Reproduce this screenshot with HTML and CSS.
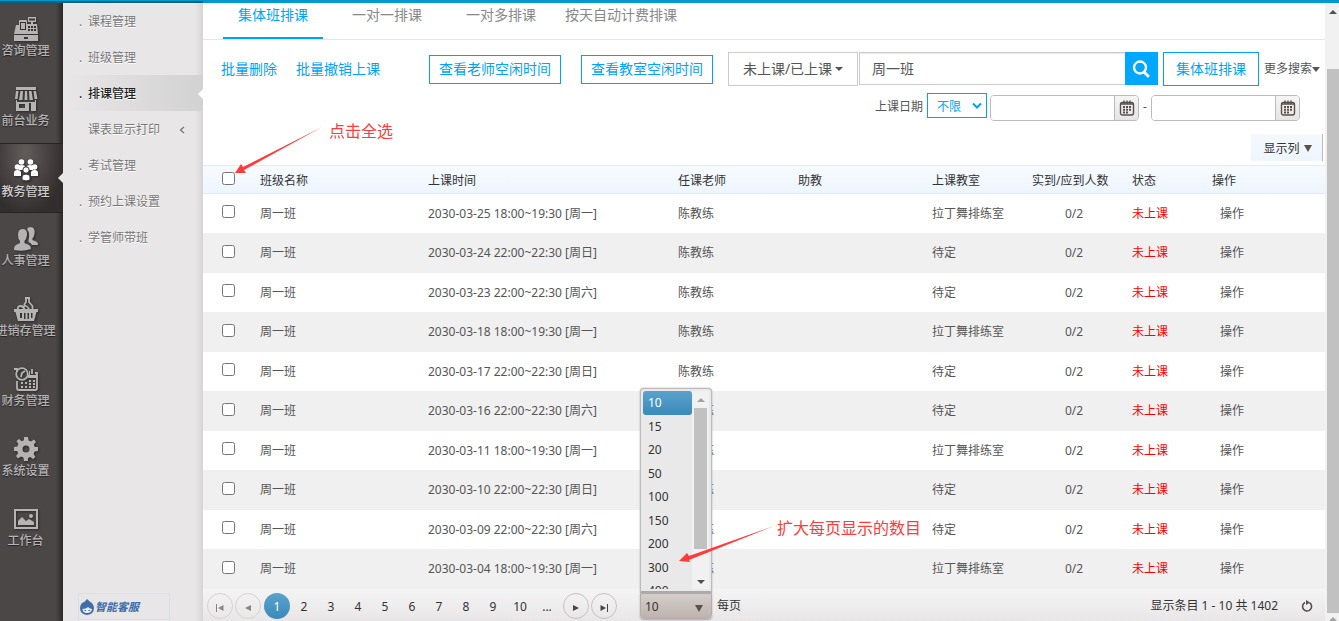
FILE: index.html
```html
<!DOCTYPE html>
<html lang="zh-CN">
<head>
<meta charset="utf-8">
<title>排课管理</title>
<link rel="stylesheet" href="styles.css">
</head>
<body>
<div class="topbar"><div class="topbar-shade"></div></div>
<div class="app">
  <nav class="rail">
    <a class="rail-item" href="#"><svg class="rail-icon" viewBox="0 0 24 24"><path fill-rule="evenodd" d="M14 0h8v5h-3v2h4l1 10H0l2-9h3V4q0-1 1-1h6q1 0 1 1v3h4V5h-3zM15 1.500h6v2h-6zM6 5v8h6V5zM7 6h4v6H7zM14 9v2h2V9zm3 0v2h2V9zm3 0v2h2V9zm-6 3v2h2v-2zm3 0v2h2v-2zm3 0v2h2v-2z"/><path fill-rule="evenodd" d="M0 18h24v6H0zm10 2v2h4v-2z"/></svg><span>咨询管理</span></a>
    <a class="rail-item" href="#"><svg class="rail-icon" viewBox="0 0 24 24"><path d="M2 0h20v3H2zM2 4h2.500L3.500 12H1zM6.500 4H9l-.5 9H5zM11 4h2l.5 9h-3zM15 4h2.500l1.500 9h-3.500zM19.500 4H22l1.500 8h-3z"/><path fill-rule="evenodd" d="M2 13h1v2h18v-2h1v11h-5v-8h-2v8H2zm3 4v4h6v-4z"/></svg><span>前台业务</span></a>
    <a class="rail-item rail-active" href="#"><svg class="rail-icon" viewBox="0 0 24 24"><circle cx="7.500" cy="4" r="2.800"/><circle cx="16.500" cy="4" r="2.800"/><path d="M5 12V9q0-2 3-2t3 2l1 2 1-2q0-2 3-2t3 2v3z"/><g><circle cx="3.500" cy="9" r="2.800"/><circle cx="20.500" cy="9" r="2.800"/><path d="M0 18v-3q0-3 3.500-3T7 15v3zM17 18v-3q0-3 3.500-3t3.500 3v3z"/></g><g stroke="#35302f" stroke-width="1"><circle cx="12" cy="12" r="3.200"/><path d="M8 22v-3q0-3 4-3t4 3v3q-4 2-8 0z"/></g></svg><span>教务管理</span></a>
    <a class="rail-item" href="#"><svg class="rail-icon" viewBox="0 0 24 24"><path d="M13 2q1-2 3.500-2 5 0 4 7-.5 3-2 4v2l4.500 2q1 1 1 3h-6q-1-2-3.500-3v-2q2-6-1.500-11z"/><path d="M8.500 2q5 0 4.500 6-.5 4-2.500 6v2l4.500 2q2 1 2 4-8 3-17 1 0-4 2-5l4-2v-2Q4 12 4 8q0-6 4.500-6z"/></svg><span>人事管理</span></a>
    <a class="rail-item" href="#"><svg class="rail-icon" viewBox="0 0 24 24"><path fill="none" stroke="currentColor" stroke-width="1.800" d="M11 1h5M12 1v4l-2 3M15 1v4l3.500 4v4M4 13q-1-4 3-4 2 0 4 4M9 10q3-3 6 2"/><path fill-rule="evenodd" d="M0 12h24v3h-1.500l-2.500 9H4l-2.500-9H0zm6 4v5h2v-5zm4 0v6h1.500v-6zm3.500 0v6H15v-6zm3.500 0v5h1.500v-5z"/></svg><span>进销存管理</span></a>
    <a class="rail-item" href="#"><svg class="rail-icon" viewBox="0 0 24 24"><g fill="none" stroke="currentColor" stroke-width="1.800"><circle cx="8" cy="7" r="5.800"/><path d="M0 2h3v3M7 10l1-4 3-2M3 14v7q0 2 2 2h16q2 0 2-2V6h-2M18 2v5"/></g><path d="M14 8h9v3h-9zM15 4h1v4h-1zM7 15h2v2H7zm4 0h2v2h-2zm4-2h2v2h-2zm4 0h2v2h-2zm-4 3h2v2h-2zm4 0h2v2h-2zM7 19h2v2H7zm4 0h2v2h-2zm4 0h2v2h-2zm4 0h2v2h-2z"/></svg><span>财务管理</span></a>
    <a class="rail-item" href="#"><svg class="rail-icon" viewBox="0 0 24 24"><path fill-rule="evenodd" d="M10 0h4l.6 3.400 2.500 1L20 2.500 22 5l-2.200 2.600 1 2.400H24v4l-3.400.6-1 2.500L21.500 20 19 22l-2.600-2-2.400 1v3h-4l-.6-3.400-2.500-1L4 21.500 2 19l2.200-2.600L3.200 14H0v-4l3.400-.6 1-2.500L2.500 4 5 2l2.600 2.200 2.400-1zM12 8.500a3.500 3.500 0 1 0 0 7 3.500 3.500 0 0 0 0-7z"/></svg><span>系统设置</span></a>
    <a class="rail-item" href="#"><svg class="rail-icon" viewBox="0 0 24 24"><path fill-rule="evenodd" d="M0 2h24v20H0zm2 2v16h20V4z"/><path d="M4 18v-4l4-4 4 4 3-2 5 3v3z"/><circle cx="17" cy="9" r="2"/></svg><span>工作台</span></a>
  </nav>
  <aside class="submenu">
    <ul class="submenu-list">
      <li><a href="#"><i>.</i>课程管理</a></li>
      <li><a href="#"><i>.</i>班级管理</a></li>
      <li class="current"><a href="#"><i>.</i>排课管理</a></li>
      <li><a href="#"><i></i>课表显示打印<svg class="chevron" viewBox="0 0 6 8"><path d="M5 1 1.500 4 5 7" fill="none" stroke="currentColor" stroke-width="1.300"/></svg></a></li>
      <li><a href="#"><i>.</i>考试管理</a></li>
      <li><a href="#"><i>.</i>预约上课设置</a></li>
      <li><a href="#"><i>.</i>学管师带班</a></li>
    </ul>
    <a class="service" href="#"><svg viewBox="0 0 14 16"><path d="M7 0q3 3 5 4 2 3 2 5 0 6-7 7-7-1-7-7 0-3 2-5 3-1 5-4z" fill="#3f6ea9"/><path d="M2.500 10q4 0 5.500-2 2 2 4 2-.5 4-5 4t-4.500-4z" fill="#e9eef6"/><path d="M4.500 11.500h1.500M8.500 11.500h1.500" stroke="#3f6ea9"/></svg>智能客服</a>
  </aside>
  <main class="main">
    <nav class="tabs">
      <a class="tab tab-active" href="#">集体班排课</a>
      <a class="tab" href="#">一对一排课</a>
      <a class="tab" href="#">一对多排课</a>
      <a class="tab tab-long" href="#">按天自动计费排课</a>
    </nav>
    <section class="toolbar">
      <a class="link" href="#">批量删除</a>
      <a class="link" href="#">批量撤销上课</a>
      <button class="outline first">查看老师空闲时间</button>
      <button class="outline">查看教室空闲时间</button>
      <form class="search">
        <button type="button" class="state">未上课/已上课<span class="caret"></span></button>
        <input class="keyword" type="text" aria-label="班级名称" value="周一班">
        <button type="button" class="search-btn" aria-label="搜索"><svg viewBox="0 0 18 18"><circle cx="8" cy="7.500" r="6" fill="none" stroke="#fff" stroke-width="2.400"/><path d="m12 12 4 4" stroke="#fff" stroke-width="3" stroke-linecap="round"/></svg></button>
      </form>
      <button class="outline big">集体班排课</button>
      <a class="more" href="#">更多搜索<span class="caret wide"></span></a>
    </section>
    <section class="dates">
      <label for="range">上课日期</label>
      <span class="range"><select id="range"><option>不限</option></select><svg viewBox="0 0 10 7"><path d="m1 1.500 4 4 4-4" fill="none" stroke="#00a2ff" stroke-width="2"/></svg></span>
      <span class="date"><input type="text" aria-label="开始日期"><button aria-label="选择开始日期"><svg viewBox="0 0 16 16"><rect x="1.500" y="2.500" width="13" height="12.500" rx="2"/><path d="M5 .5v3M8 .5v3M11 .5v3M1.500 4h13"/><path class="cells" d="M4 7h8M4 9.800h8M4 12.600h5"/></svg></button></span>
      <span class="dash">-</span>
      <span class="date"><input type="text" aria-label="结束日期"><button aria-label="选择结束日期"><svg viewBox="0 0 16 16"><rect x="1.500" y="2.500" width="13" height="12.500" rx="2"/><path d="M5 .5v3M8 .5v3M11 .5v3M1.500 4h13"/><path class="cells" d="M4 7h8M4 9.800h8M4 12.600h5"/></svg></button></span>
    </section>
    <div class="columns"><button>显示列<span class="tri"></span></button></div>
    <table class="grid">
      <colgroup><col class="c-check"><col class="c-name"><col class="c-time"><col class="c-teacher"><col class="c-helper"><col class="c-room"><col class="c-count"><col class="c-state"><col></colgroup>
      <thead><tr><th><input type="checkbox" aria-label="全选"></th><th>班级名称</th><th>上课时间</th><th>任课老师</th><th>助教</th><th>上课教室</th><th>实到/应到人数</th><th>状态</th><th>操作</th></tr></thead>
      <tbody>
        <tr><td><input type="checkbox" aria-label="选择"></td><td>周一班</td><td>2030-03-25 18:00~19:30 [周一]</td><td>陈教练</td><td></td><td>拉丁舞排练室</td><td>0/2</td><td>未上课</td><td>操作</td></tr>
        <tr><td><input type="checkbox" aria-label="选择"></td><td>周一班</td><td>2030-03-24 22:00~22:30 [周日]</td><td>陈教练</td><td></td><td>待定</td><td>0/2</td><td>未上课</td><td>操作</td></tr>
        <tr><td><input type="checkbox" aria-label="选择"></td><td>周一班</td><td>2030-03-23 22:00~22:30 [周六]</td><td>陈教练</td><td></td><td>待定</td><td>0/2</td><td>未上课</td><td>操作</td></tr>
        <tr><td><input type="checkbox" aria-label="选择"></td><td>周一班</td><td>2030-03-18 18:00~19:30 [周一]</td><td>陈教练</td><td></td><td>拉丁舞排练室</td><td>0/2</td><td>未上课</td><td>操作</td></tr>
        <tr><td><input type="checkbox" aria-label="选择"></td><td>周一班</td><td>2030-03-17 22:00~22:30 [周日]</td><td>陈教练</td><td></td><td>待定</td><td>0/2</td><td>未上课</td><td>操作</td></tr>
        <tr><td><input type="checkbox" aria-label="选择"></td><td>周一班</td><td>2030-03-16 22:00~22:30 [周六]</td><td>陈教练</td><td></td><td>待定</td><td>0/2</td><td>未上课</td><td>操作</td></tr>
        <tr><td><input type="checkbox" aria-label="选择"></td><td>周一班</td><td>2030-03-11 18:00~19:30 [周一]</td><td>陈教练</td><td></td><td>拉丁舞排练室</td><td>0/2</td><td>未上课</td><td>操作</td></tr>
        <tr><td><input type="checkbox" aria-label="选择"></td><td>周一班</td><td>2030-03-10 22:00~22:30 [周日]</td><td>陈教练</td><td></td><td>待定</td><td>0/2</td><td>未上课</td><td>操作</td></tr>
        <tr><td><input type="checkbox" aria-label="选择"></td><td>周一班</td><td>2030-03-09 22:00~22:30 [周六]</td><td>陈教练</td><td></td><td>待定</td><td>0/2</td><td>未上课</td><td>操作</td></tr>
        <tr><td><input type="checkbox" aria-label="选择"></td><td>周一班</td><td>2030-03-04 18:00~19:30 [周一]</td><td>陈教练</td><td></td><td>拉丁舞排练室</td><td>0/2</td><td>未上课</td><td>操作</td></tr>
      </tbody>
    </table>
    <footer class="pager">
      <div class="pages">
        <button class="round off" aria-label="首页"><svg viewBox="0 0 8 8"><path d="M0 0h1v8H0zM7.500 1v6L2 4z"/></svg></button>
        <button class="round off" aria-label="上一页"><svg viewBox="0 0 8 8"><path d="M7 1v6L1 4z"/></svg></button>
        <span class="numbers"><a class="page on" href="#">1</a><a class="page" href="#">2</a><a class="page" href="#">3</a><a class="page" href="#">4</a><a class="page" href="#">5</a><a class="page" href="#">6</a><a class="page" href="#">7</a><a class="page" href="#">8</a><a class="page" href="#">9</a><a class="page" href="#">10</a><a class="page" href="#">...</a></span>
        <button class="round" aria-label="下一页"><svg viewBox="0 0 8 8"><path d="M1 1v6l6-3z"/></svg></button>
        <button class="round" aria-label="末页"><svg viewBox="0 0 8 8"><path d="M7 0h1v8H7zM.5 1v6L6 4z"/></svg></button>
      </div>
      <div class="size">
        <button class="size-btn" aria-haspopup="listbox" aria-expanded="true">10<span class="tri"></span></button>
        <div class="popup">
          <ul role="listbox" aria-label="每页">
            <li role="option" aria-selected="true">10</li><li role="option">15</li><li role="option">20</li><li role="option">50</li><li role="option">100</li><li role="option">150</li><li role="option">200</li><li role="option">300</li><li role="option">400</li>
          </ul>
          <div class="bar"><span class="up pale"></span><span class="thumb"></span><span class="down"></span></div>
        </div>
      </div>
      <span class="per">每页</span>
      <span class="total">显示条目 1 - 10 共 1402</span>
      <button class="refresh" aria-label="刷新"><svg viewBox="0 0 12 12"><path d="M4 2.500A4.500 4.500 0 1 0 8.500 2.700" fill="none" stroke="#5a504c" stroke-width="1.600"/><path d="M5 0v5L9 2.500z" fill="#5a504c"/></svg></button>
    </footer>
  </main>
  <div class="scroll"><span class="up"></span><span class="scroll-thumb"></span><span class="up pale"></span></div>
</div>
<svg class="arrow arrow-a" viewBox="0 0 90 52"><path d="M87 1 8 41 6 38 0 47h11l-2-3z" fill="#ff3b3b"/></svg>
<span class="note note-a">点击全选</span>
<svg class="arrow arrow-b" viewBox="0 0 97 40"><path d="M95 1 10 31 8 28 0 36l11 1-1-2z" fill="#ff3b3b"/></svg>
<span class="note note-b">扩大每页显示的数目</span>
</body>
</html>
```

FILE: styles.css
```css
* { box-sizing: border-box; }
body {
  margin: 0;
  height: 100vh;
  display: flex;
  flex-direction: column;
  overflow: hidden;
  position: relative;
  background: #fff;
  color: #555;
  font: 12px/20px "Noto Sans", "Noto Sans CJK SC", sans-serif;
}
a { color: inherit; text-decoration: none; }
button, input, select { font: inherit; color: inherit; margin: 0; }
button { padding: 0; cursor: pointer; white-space: nowrap; }
svg { display: block; }

.topbar { height: 3px; background: #0099cf; flex: none; }
.topbar-shade { width: 203px; height: 3px; border-top: 1px solid #0099cf; background: #006584; }
.app { flex: 1; min-height: 0; display: flex; }

/* icon rail */
.rail { width: 63px; flex: none; background: linear-gradient(90deg, transparent 56px, #2b2829 63px), #4b4747; }
.rail-item {
  height: 70px;
  padding: 14px 12px 0 0;
  display: flex;
  flex-direction: column;
  align-items: center;
  color: #b5b3b3;
  font-weight: 500;
  line-height: 20px;
  white-space: nowrap;
  text-shadow: 0 1px 1px #222;
  position: relative;
}
.rail-icon { width: 24px; height: 24px; flex: none; fill: currentColor; filter: drop-shadow(1px 1px 1px #2c2929); }
.rail-active {
  background: radial-gradient(ellipse at 40% 15%, #625c5b, #332e2e 75%);
  border-top: 1px solid #252222;
  border-bottom: 1px solid #252222;
  color: #cfcdcd;
}
.rail-active .rail-icon { color: #fff; }
.rail-active::after {
  content: "";
  position: absolute;
  right: 0;
  top: 29px;
  border: 5px solid transparent;
  border-left: 0;
  border-right-color: #e9e7e8;
}

/* second-level menu */
.submenu {
  width: 140px;
  flex: none;
  display: flex;
  flex-direction: column;
  justify-content: space-between;
  background: linear-gradient(90deg, transparent 132px, #d6d5d6 140px), #e8e6e7;
}
.submenu-list { margin: 0; padding: 0; list-style: none; color: #777; text-shadow: 0 1px 0 #fff; }
.submenu-list li { height: 36px; position: relative; }
.submenu-list a { height: 36px; padding: 2px 18px 0 16px; display: flex; align-items: center; }
.submenu-list i { width: 9px; font-style: normal; }
.chevron { width: 6px; height: 8px; margin-left: auto; }
.submenu-list .current { background: linear-gradient(90deg, #e8e6e7, #d3d2d3); color: #222; font-weight: 500; }
.current::after {
  content: "";
  position: absolute;
  right: 0;
  top: 14px;
  border: 5px solid transparent;
  border-left: 0;
  border-right-color: #fff;
}
.service {
  width: 92px;
  height: 27px;
  margin: 0 0 1px 15px;
  padding-left: 1px;
  display: flex;
  align-items: center;
  gap: 1px;
  border: 1px solid #dcdee6;
  color: #3d6cab;
  font-size: 11px;
  font-weight: bold;
  font-style: italic;
}
.service svg { width: 14px; height: 16px; }

/* content */
.main { flex: 1; min-width: 0; display: flex; flex-direction: column; }
.tabs {
  height: 37px;
  flex: none;
  padding-left: 20px;
  display: flex;
  gap: 14px;
  border-bottom: 1px solid #e5e5e5;
  font-size: 14px;
  line-height: 24px;
  color: #888;
}
.tab { height: 36px; padding: 0 15px; white-space: nowrap; }
.tab-long { padding: 0; }
.tab-active { border-bottom: 2px solid #00a2ff; color: #00a2ff; }

.toolbar { height: 34px; margin: 12px 5px 0 18px; display: flex; align-items: center; font-size: 14px; flex: none; }
.link { color: #00a2ff; margin-right: 19px; white-space: nowrap; }
.outline {
  width: 132px;
  height: 29px;
  margin-right: 20px;
  flex: none;
  background: #fff;
  border: 1px solid #00a2ff;
  color: #00a2ff;
}
.outline.first { margin-left: 30px; }
.outline.big { width: 96px; height: 34px; margin: 0 5px; }
.search { flex: 1; margin-left: -5px; display: flex; min-width: 0; }
.state { width: 130px; height: 34px; margin-right: 1px; flex: none; background: #fff; border: 1px solid #ccc; }
.caret {
  display: inline-block;
  margin-left: 3px;
  vertical-align: 3px;
  border: 4px solid transparent;
  border-top: 4px solid #555;
  border-bottom: 0;
}
.caret.wide { margin-left: 0; vertical-align: 1px; border-width: 5px 4px 0; }
.keyword {
  flex: 1;
  min-width: 0;
  height: 33px;
  padding: 0 12px 2px;
  border: 1px solid #ccc;
  border-right: 0;
  box-shadow: inset 0 1px 1px #e8e8e8;
}
.search-btn { width: 33px; height: 33px; flex: none; background: #00a7ff; border: 0; display: grid; place-items: center; }
.search-btn svg { width: 18px; height: 18px; }
.more { font-size: 12px; white-space: nowrap; flex: none; }

.dates { height: 28px; margin: 7px 25px 0 0; display: flex; justify-content: flex-end; align-items: flex-start; flex: none; }
.dates label { line-height: 28px; margin-right: 4px; }
.range { position: relative; margin-right: 3px; }
.range select {
  display: block;
  width: 60px;
  height: 25px;
  padding: 2px 9px 0;
  appearance: none;
  background: #fff;
  border: 1px solid #00a2ff;
  border-radius: 0;
  color: #00a2ff;
}
.range svg { position: absolute; right: 5px; top: 9px; width: 10px; height: 7px; pointer-events: none; }
.date { width: 149px; height: 26px; margin-top: 2px; display: flex; border: 1px solid #bbb; border-radius: 4px; overflow: hidden; }
.date input { flex: 1; min-width: 0; border: 0; padding: 0 6px; }
.date button { width: 24px; border: 0; border-left: 1px solid #bbb; background: linear-gradient(#f6f5f5, #e6e4e4); display: grid; place-items: center; }
.date svg { width: 16px; height: 16px; fill: none; stroke: #5a504c; stroke-width: 1.4; }
.date .cells { stroke-width: 2; stroke-dasharray: 2 1; }
.dash { width: 12px; line-height: 27px; text-align: center; }

.columns { height: 27px; margin: 13px 2px 4px 0; display: flex; justify-content: flex-end; flex: none; }
.columns button { width: 72px; padding: 2px 0 0 2px; border: 0; border-right: 1px solid #bbb; background: linear-gradient(#f5f9fe, #edf5fd); color: #333; }
.tri {
  display: inline-block;
  margin-left: 4px;
  vertical-align: 1px;
  border: 4px solid transparent;
  border-top: 7px solid #5a504c;
  border-bottom: 0;
}

.grid { width: 100%; table-layout: fixed; border-collapse: separate; border-spacing: 0; flex: none; }
.c-check { width: 47px; }
.c-name { width: 168px; }
.c-time { width: 250px; }
.c-teacher { width: 120px; }
.c-helper { width: 134px; }
.c-room { width: 100px; }
.c-count { width: 100px; }
.c-state { width: 80px; }
.grid th, .grid td { padding: 0 0 0 10px; text-align: left; white-space: nowrap; }
.grid th {
  height: 29px;
  padding-top: 2px;
  background: linear-gradient(#f7fbff, #edf5fe);
  border-top: 1px solid #e6ebf1;
  border-bottom: 1px solid #e6ebf1;
  color: #333;
  font-weight: normal;
}
.grid td { height: 39px; }
.grid tr:nth-child(even) td { height: 40px; background: #f0f0f0; }
.grid tr > :first-child { padding-left: 19px; }
.grid input { display: block; width: 13px; height: 13px; margin: 0 0 4px; }
.grid td:nth-child(7) { padding-left: 43px; }
.grid td:nth-child(8) { color: #f00; }
.grid td:nth-child(9) { padding-left: 18px; }

/* pager */
.pager {
  flex: 1;
  min-height: 32px;
  padding: 2px 12px 0 4px;
  display: flex;
  align-items: center;
  background: linear-gradient(#f5f4f4, #e8e6e6);
  color: #333;
}
.pages { display: flex; gap: 2px; align-items: center; }
.numbers { display: flex; gap: 1px; margin: 0 1px; }
.round { width: 26px; height: 26px; border: 1px solid #c4c1c1; border-radius: 50%; background: none; display: grid; place-items: center; padding-top: 3px; }
.round svg { width: 8px; height: 8px; fill: #4d4340; }
.round.off { border-color: #d4d2d2; }
.round.off svg { fill: #8b8583; }
.page { width: 26px; height: 26px; line-height: 28px; text-align: center; }
.page.on { border-radius: 50%; background: linear-gradient(#5ba2cc, #3a8abb); color: #fff; }
.size { position: relative; margin-left: 23px; }
.size-btn {
  width: 72px;
  height: 26px;
  padding: 2px 8px 0 4px;
  display: flex;
  align-items: center;
  justify-content: space-between;
  border: 1px solid #b3adab;
  border-radius: 0 0 4px 4px;
  background: linear-gradient(#d5cecb, #bdb2ae);
  box-shadow: 0 1px 2px #aaa;
}
.popup {
  position: absolute;
  left: 0;
  bottom: 26px;
  width: 72px;
  height: 205px;
  padding: 2px;
  display: flex;
  background: #e9e9e9;
  border: 1px solid #bbb;
  border-bottom: 2px solid #aaa;
  border-radius: 4px 4px 0 0;
  box-shadow: 0 0 2px #aaa;
  overflow: hidden;
}
.popup ul { width: 49px; margin: 0; padding: 0; list-style: none; overflow: hidden; }
.popup li { height: 23px; padding-left: 5px; line-height: 23px; }
.popup li:nth-child(odd) { height: 24px; }
.popup li[aria-selected] { background: linear-gradient(#5ba2cc, #3a8abb); border-radius: 3px; color: #fff; }
.bar { width: 17px; padding: 7px 2px 5px; display: flex; flex-direction: column; align-items: center; background: #f1f1f1; }
.thumb { width: 13px; height: 141px; margin: 6px 0 auto; background: #c1c1c1; }
.up, .down { flex: none; border: 4px solid transparent; }
.up { border-top: 0; border-bottom-color: #505050; }
.down { border-bottom: 0; border-top-color: #505050; }
.up.pale { border-bottom-color: #a3a3a3; }
.size-btn .tri { margin-top: 2px; }
.per { margin-left: 5px; }
.total { margin-left: auto; }
.refresh { width: 12px; height: 12px; margin-left: 23px; border: 0; background: none; }

.scroll { width: 14px; flex: none; padding: 7px 0 0 2px; display: flex; flex-direction: column; align-items: center; background: #f1f1f1; }
.scroll-thumb { align-self: stretch; flex: 1; margin: 55px 0 4px; background: #c1c1c1; }

/* annotations laid over the page */
.arrow { position: absolute; pointer-events: none; }
.arrow-a { left: 235px; top: 126px; width: 90px; height: 52px; }
.arrow-b { left: 679px; top: 525px; width: 97px; height: 40px; }
.note { position: absolute; color: #ff3b3b; font-size: 16px; line-height: 24px; white-space: nowrap; }
.note-a { left: 329px; top: 119px; }
.note-b { left: 777px; top: 516px; }
```
